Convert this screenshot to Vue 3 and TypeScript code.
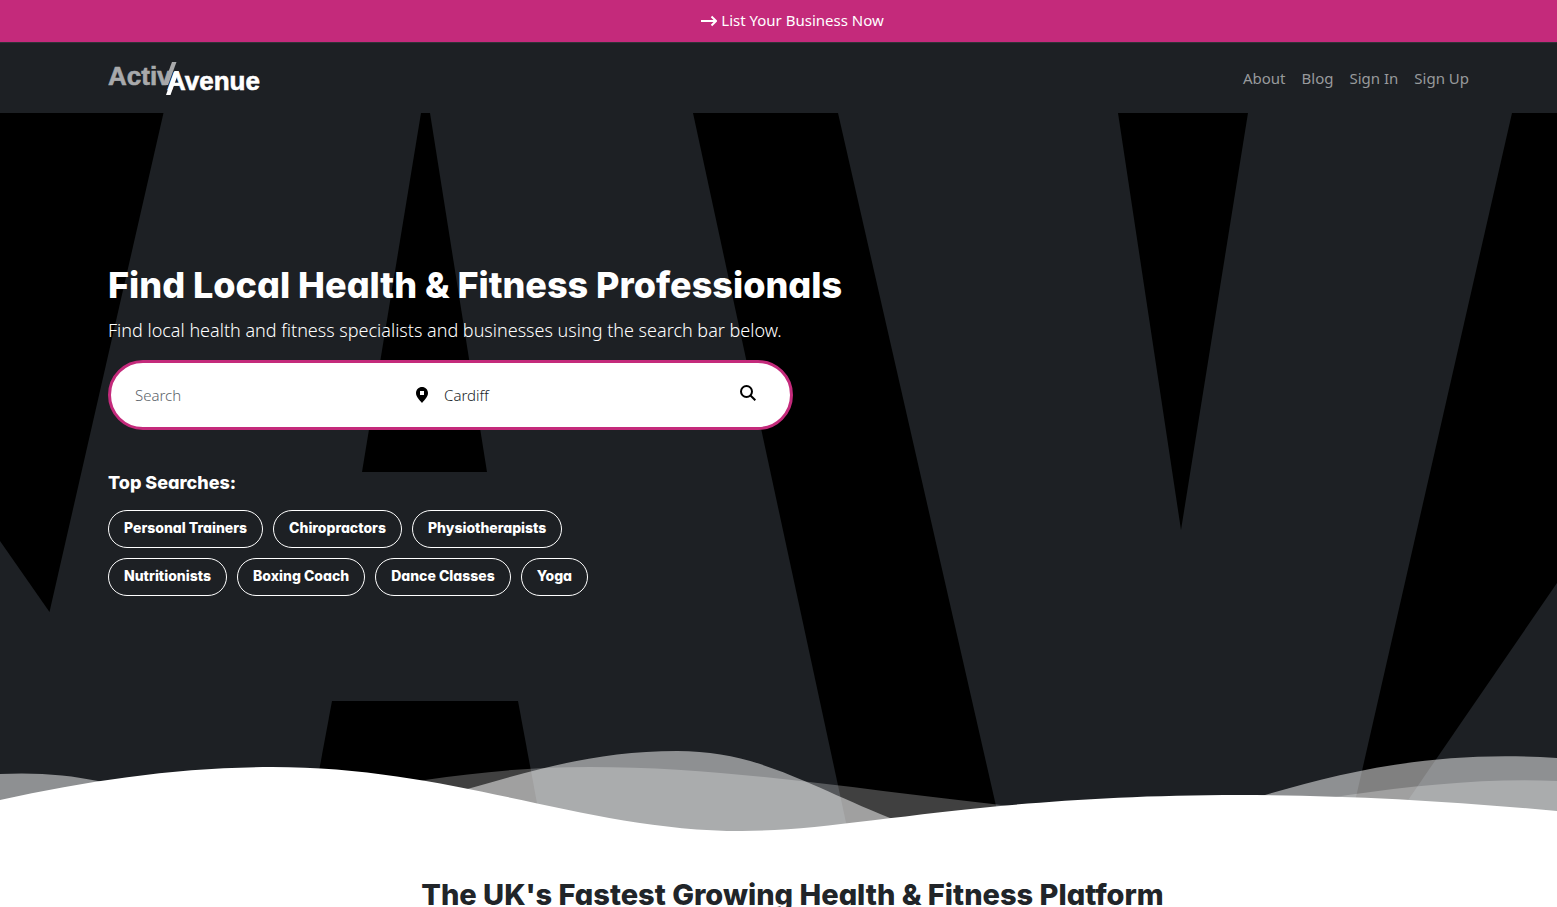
<script setup lang="ts">
import { ref } from 'vue'

interface NavLink {
  label: string
  href: string
}

const links: NavLink[] = [
  { label: 'About', href: '#about' },
  { label: 'Blog', href: '#blog' },
  { label: 'Sign In', href: '#sign-in' },
  { label: 'Sign Up', href: '#sign-up' },
]

const topSearches: string[] = [
  'Personal Trainers',
  'Chiropractors',
  'Physiotherapists',
  'Nutritionists',
  'Boxing Coach',
  'Dance Classes',
  'Yoga',
]

const query = ref('')
const place = ref('Cardiff')
</script>

<template>
  <div class="page">
    <a class="banner" href="#list">
      <svg class="banner-arrow" viewBox="0 0 16 12" aria-hidden="true">
        <path d="M0 6H15M10.500 1.500L15 6L10.500 10.500" />
      </svg>
      <span>List Your Business Now</span>
    </a>

    <header class="topbar">
      <a class="brand" href="#home" aria-label="ActivAvenue">
        <svg class="logo" viewBox="0 0 152 36" aria-hidden="true">
          <text class="logo-activ" x="0" y="25">Activ</text>
          <path class="logo-slash" d="M64 2H68.500L60 25H55.500Z" />
          <text class="logo-avenue" x="59" y="30">Avenue</text>
          <path class="logo-leg" d="M66.500 11H71L62.500 35H58Z" />
        </svg>
      </a>
      <nav class="nav" aria-label="Main">
        <a v-for="link in links" :key="link.label" :href="link.href">{{ link.label }}</a>
      </nav>
    </header>

    <main>
      <section class="hero">
        <svg class="hero-art" viewBox="0 0 1557 728" preserveAspectRatio="xMidYMin slice" aria-hidden="true">
          <path d="M0 0H163.500L49.500 499L0 428Z" />
          <path d="M421 0H430L487 359H362Z" />
          <path d="M332 588H518L544 728H306Z" />
          <path d="M693 0H838L1004 728H850Z" />
          <path d="M1118 0H1248L1181 417Z" />
          <path d="M1512 0H1557V470L1380 728H1346Z" />
        </svg>

        <div class="hero-body">
          <h1>Find Local Health &amp; Fitness Professionals</h1>
          <p class="lead">Find local health and fitness specialists and businesses using the search bar below.</p>

          <form class="search" role="search" @submit.prevent>
            <input v-model="query" class="field field-query" type="text" placeholder="Search" aria-label="Search" />
            <svg class="pin" viewBox="0 0 12 16" aria-hidden="true">
              <path fill-rule="evenodd" d="M6 0C2.700 0 0 2.600 0 6C0 9.800 3.500 13 6 16C8.500 13 12 9.800 12 6C12 2.600 9.300 0 6 0ZM4 4H8V8H4Z" />
            </svg>
            <input v-model="place" class="field field-place" type="text" aria-label="Location" />
            <button class="go" type="submit" aria-label="Search now">
              <svg viewBox="0 0 16 16" aria-hidden="true">
                <circle cx="6.500" cy="6.500" r="5.500" />
                <path d="M10.500 10.500L15.300 15.300" />
              </svg>
            </button>
          </form>

          <h2 class="top-title">Top Searches:</h2>
          <div class="pills">
            <a v-for="item in topSearches" :key="item" class="pill" href="#search">{{ item }}</a>
          </div>
        </div>

        <svg class="waves" viewBox="0 740 1557 100" preserveAspectRatio="none" aria-hidden="true">
          <path class="wave-mid" d="M0 774C35 772 70 775 98 781L200 806H400L471 788C540 768 600 751 677 751C755 751 800 781 890 818L1190 815L1265 795C1350 770 1440 750 1557 758V840H0Z" />
          <path class="wave-faint" d="M350 795L425 780C480 772 530 767 590 767C730 767 860 790 1010 806H1280L1348 795C1420 785 1490 778 1557 781V840H350Z" />
          <path class="wave-front" d="M0 800C90 780 180 767 272 767C455 767 585 831 742 831C850 831 980 795 1240 795C1345 795 1450 801 1557 811V840H0Z" />
        </svg>
      </section>

      <section class="intro">
        <h2>The UK's Fastest Growing Health &amp; Fitness Platform</h2>
      </section>
    </main>
  </div>
</template>

<style>
body {
  margin: 0;
  background: #fff;
}

html {
  overflow: hidden;
}
</style>

<style scoped>
.page {
  height: 100vh;
  overflow: hidden;
  font-family: "Noto Sans", "Open Sans", sans-serif;
  font-size: 15px;
  color: #fff;
}

.page * {
  box-sizing: border-box;
}

a {
  color: inherit;
  text-decoration: none;
}

.banner {
  display: flex;
  align-items: center;
  justify-content: center;
  gap: 4px;
  padding: 8px 0 10px 28px;
  line-height: 24px;
  background: #c42a7b;
}

.banner-arrow {
  width: 16px;
  height: 12px;
  margin-top: 2px;
  fill: none;
  stroke: #fff;
  stroke-width: 2;
}

.topbar {
  display: flex;
  align-items: center;
  justify-content: space-between;
  padding: 17px 88px 17px 108px;
  background: #1d2024;
  border-top: 1px solid #303338;
}

.brand {
  display: flex;
}

.logo {
  width: 152px;
  height: 36px;
  font-family: "Liberation Sans", Arial, sans-serif;
  font-size: 26px;
  font-weight: 700;
}

.logo-activ,
.logo-slash {
  fill: #a8a9ab;
}

.logo-avenue,
.logo-leg {
  fill: #fff;
}

.logo-activ {
  stroke: #a8a9ab;
  stroke-width: 0.6;
}

.logo-avenue {
  stroke: #fff;
  stroke-width: 0.6;
}

.nav {
  display: flex;
  gap: 16px;
  line-height: 24px;
  color: #989a9c;
}

.hero {
  position: relative;
  background: #1d2024;
}

.hero-art {
  position: absolute;
  inset: 0;
  width: 100%;
  height: 100%;
}

.hero-body {
  position: relative;
  padding: 148px 108px 244px;
}

h1,
h2,
.pill {
  margin: 0;
  font-family: Inter, "Liberation Sans", sans-serif;
  font-weight: 800;
  font-feature-settings: "cv11";
}

h1 {
  font-size: 36px;
  line-height: 48px;
}

.lead {
  margin: 6px 0 15px;
  font-size: 18px;
  font-weight: 300;
  line-height: 30px;
}

.search {
  display: flex;
  align-items: center;
  width: 100%;
  max-width: 685px;
  height: 70px;
  padding: 0 34px 0 24px;
  background: #fff;
  border: 3px solid #c42a7b;
  border-radius: 35px;
}

.field {
  min-width: 0;
  padding: 0;
  border: 0;
  outline: 0;
  background: transparent;
  font: inherit;
  font-weight: 300;
  line-height: 24px;
  color: #212529;
}

.field-query {
  flex: 19;
}

.field-place {
  flex: 20;
}

.field::placeholder {
  color: #5c636a;
  opacity: 1;
}

.pin {
  flex: none;
  width: 12px;
  height: 16px;
  margin-right: 16px;
}

.go {
  display: flex;
  padding: 0 0 4px;
  border: 0;
  background: transparent;
}

.go svg {
  width: 16px;
  height: 16px;
  fill: none;
  stroke: #000;
  stroke-width: 2;
}

.top-title {
  margin: 41px 0 15px;
  font-size: 18px;
  line-height: 24px;
}

.pills {
  display: flex;
  flex-wrap: wrap;
  gap: 10px;
  max-width: 500px;
}

.pill {
  padding: 0 15px 3px;
  font-size: 14px;
  line-height: 33px;
  border: 1px solid #fff;
  border-radius: 19px;
}

.waves {
  position: absolute;
  left: 0;
  bottom: 0;
  width: 100%;
  height: 100px;
}

.wave-mid {
  fill: rgba(255, 255, 255, 0.5);
}

.wave-faint {
  fill: rgba(255, 255, 255, 0.25);
}

.wave-front {
  fill: #fff;
}

.intro {
  padding: 36px 0 24px 28px;
  text-align: center;
  background: #fff;
}

.intro h2 {
  font-size: 29px;
  line-height: 38px;
  color: #212529;
}
</style>
